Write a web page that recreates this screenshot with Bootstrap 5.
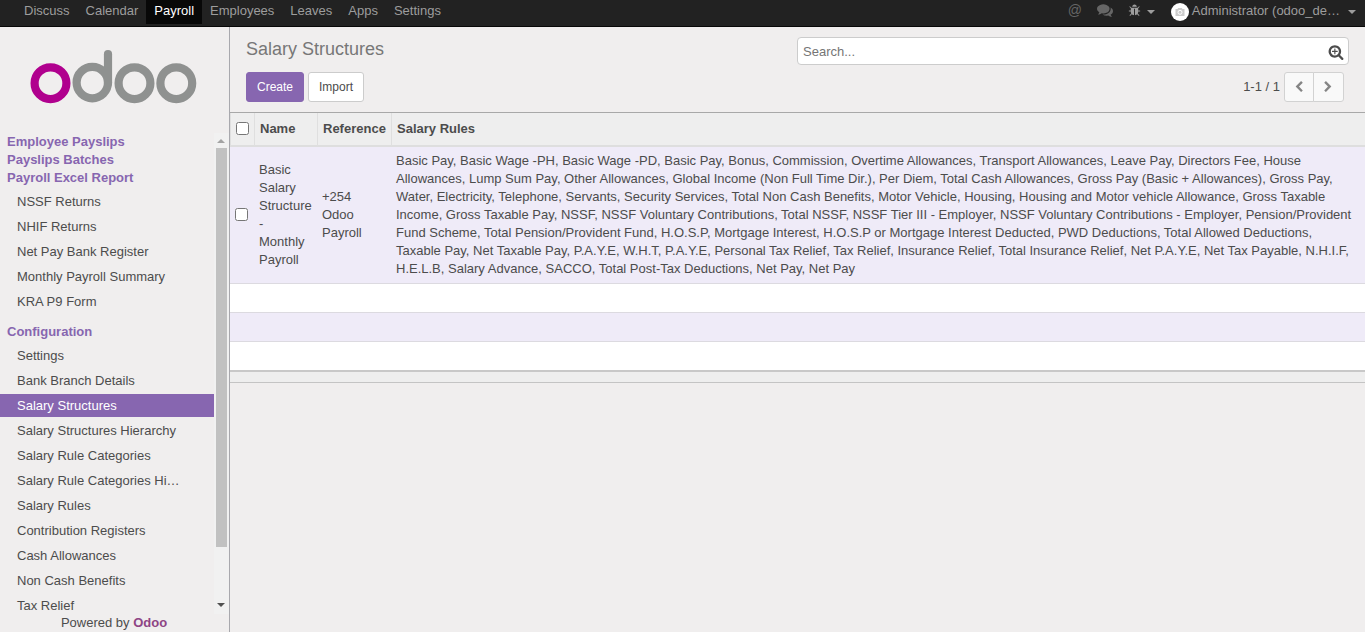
<!DOCTYPE html>
<html lang="en">
<head>
<meta charset="utf-8">
<title>Salary Structures - Odoo</title>
<meta name="viewport" content="width=device-width, initial-scale=1">
<link rel="stylesheet" href="https://cdn.jsdelivr.net/npm/bootstrap@5.3.0/dist/css/bootstrap.min.css">
<style>
:root { --brand: #8766b0; --ink: #4c4c4c; }
body { font: 13px/18px "Liberation Sans", Arial, sans-serif; color: var(--ink); background: #f0eeee; }
a { text-decoration: none; color: inherit; }
.topbar { height: 27px; background: #222; border-bottom: 1px solid #080808; color: #9d9d9d; padding: 0 0 0 16px; }
.topbar .nav-link { color: #9d9d9d; padding: 2px 8px 4px; height: 24px; line-height: 18px; }
.topbar .nav-link.active { color: #fff; background: #080808; }
.systray { height: 24px; color: #9d9d9d; }
.at-sign { color: #666; font-size: 14px; padding-top: 1px; margin-right: 15px; }
.caret { border: 4px solid transparent; border-top-color: currentColor; border-bottom: 0; }
.avatar { width: 18px; height: 18px; background: #fff; }
.side { width: 230px; border-right: 1px solid #a8a8ad; }
.logo-box { height: 106px; }
.menu-scroll { height: 481px; }
.menu-list { width: 214px; }
.section-title { color: var(--brand); font-weight: bold; padding-left: 7px; }
.menu-list .nav-link { color: var(--ink); height: 23px; padding: 3px 34px 2px 17px; margin-bottom: 2px; line-height: 18px; }
.menu-list .nav-link.active { background: var(--brand); color: #fff; }
.track { width: 15px; background: #f1f1f1; }
.thumb { width: 11px; height: 399px; background: #c1c1c1; }
.arrow-box { height: 15px; padding-right: 1px; }
.control { height: 86px; border-bottom: 1px solid #a8a8a8; padding: 10px 16px 0; }
.page-title { font-size: 18px; line-height: 22px; color: #777; padding-top: 1px; }
.control .btn { font-size: 12px; line-height: 18px; height: 30px; padding: 5px 10px; border-radius: 3px; }
.btn-brand { --bs-btn-color: #fff; --bs-btn-bg: #8766b0; --bs-btn-border-color: #8766b0; }
.btn-plain { --bs-btn-color: #4c4c4c; --bs-btn-bg: #fff; --bs-btn-border-color: #ccc; }
.btn-pager { --bs-btn-color: #858585; --bs-btn-bg: #f9f9f9; --bs-btn-border-color: #d2d2d2; width: 30px; }
.control .btn-pager { padding: 0 1px 1px 0; }
.control .btn-group .btn:first-child { border-top-right-radius: 0; border-bottom-right-radius: 0; }
.control .btn-group .btn:last-child { border-top-left-radius: 0; border-bottom-left-radius: 0; }
.searchbox { width: 552px; height: 28px; background: #fff; border: 1px solid #ccc; border-radius: 4px; padding: 2px 4px 0 5px; color: #757575; }
.listing { table-layout: fixed; width: 100%; border-collapse: separate; border-spacing: 0; }
.listing th { height: 34px; padding: 0 5px; background: #eee; border-left: 1px solid #dfdfdf; border-bottom: 2px solid #dedede; font-weight: bold; white-space: nowrap; }
.listing td { padding: 5px; vertical-align: middle; border-bottom: 1px solid #dcdae0; height: 29px; background: #fff; }
.listing tr:nth-child(odd) td { background: #efebf8; }
.listing tbody tr:last-child td { border-bottom: 0; height: 28px; }
.listing tfoot td, .listing tfoot tr:nth-child(odd) td { background: #eee; height: 13px; padding: 0; border-top: 2px solid #c8c8c8; border-bottom: 1px solid #c4c4c4; }
.listing input { width: 13px; height: 13px; margin: 0 0 2px; display: block; }
</style>
</head>
<body class="vh-100 overflow-hidden d-flex flex-column">
<nav class="topbar d-flex justify-content-between flex-shrink-0">
  <div class="nav flex-nowrap">
    <a class="nav-link" href="#">Discuss</a>
    <a class="nav-link" href="#">Calendar</a>
    <a class="nav-link active" href="#">Payroll</a>
    <a class="nav-link" href="#">Employees</a>
    <a class="nav-link" href="#">Leaves</a>
    <a class="nav-link" href="#">Apps</a>
    <a class="nav-link" href="#">Settings</a>
  </div>
  <div class="systray d-flex">
    <span class="at-sign">@</span>
    <svg style="margin:2px 15px 0 0" width="16" height="16" viewBox="0 0 1792 1792" fill="#666"><path d="M1408 768q0 139-94 257t-256.500 186.500-353.500 68.500q-86 0-176-16-124 88-278 128-36 9-86 16h-3q-11 0-20.500-8t-11.500-21q-1-3-1-6.500t.5-6.500 2-6l2.500-5 3.500-5.500 4-5 4.500-5 4-4.500q5-6 23-25t26-29.500 22.500-29 25-38.500 20.500-44q-124-72-195-177t-71-224q0-139 94-257t256.500-186.500 353.500-68.500 353.500 68.500 256.500 186.500 94 257zm384 256q0 120-71 224.500t-195 176.500q10 24 20.500 44t25 38.500 22.500 29 26 29.500 23 25q1 1 4 4.500t4.500 5 4 5 3.500 5.500l2.500 5 2 6 .5 6.500-1 6.500q-3 14-13 22t-22 7q-50-7-86-16-154-40-278-128-90 16-176 16-271 0-472-132 58 4 88 4 161 0 309-45t264-129q125-92 192-212t67-254q0-77-23-152 129 71 204 178t75 230z"/></svg>
    <svg style="margin:4px 6px 0 0" width="13" height="13" viewBox="0 0 1792 1792" fill="currentColor"><path d="M1696 960q0 26-19 45t-45 19h-224q0 171-67 290l208 209q19 19 19 45t-19 45q-18 19-45 19t-45-19l-198-197q-5 5-15 13t-42 28.500-65 36.500-82 29-97 13v-896h-128v896q-51 0-101.500-13.500t-87-33-66-39-43.500-32.500l-15-14-183 207q-20 21-48 21-24 0-43-16-19-18-20.500-44.500t15.500-46.500l202-227q-58-114-58-274h-224q-26 0-45-19t-19-45 19-45 45-19h224v-294l-173-173q-19-19-19-45t19-45 45-19 45 19l173 173h844l173-173q19-19 45-19t45 19 19 45-19 45l-173 173v294h224q26 0 45 19t19 45zm-480-576h-640q0-133 93.500-226.500t226.500-93.500 226.500 93.500 93.500 226.500z"/></svg>
    <span class="caret" style="margin:10px 16px 0 0"></span>
    <span class="avatar rounded-circle d-flex align-items-center justify-content-center" style="margin:3px 3px 0 0"><svg width="10" height="8" viewBox="0 0 10 8"><path d="M.5 1h2l.7-1h3.600l.7 1h2v7h-9z" fill="#ccc"/><circle cx="5" cy="4.300" r="2" fill="none" stroke="#fff"/></svg></span>
    <span style="padding-top:2px">Administrator (odoo_de…</span>
    <span class="caret" style="margin:10px 9px 0 8px"></span>
  </div>
</nav>
<div class="d-flex flex-grow-1">
  <aside class="side flex-shrink-0 d-flex flex-column">
    <div class="logo-box">
      <svg width="229" height="106" viewBox="0 27 229 106" fill="none" stroke="#8f9190" stroke-width="8.200">
        <circle cx="50.500" cy="83.200" r="15.900" stroke="#b0008e"/>
        <circle cx="92.300" cy="82.600" r="15.700"/><path d="M108 83V54.200" stroke-linecap="round"/>
        <circle cx="134.500" cy="83.200" r="15.900"/><circle cx="176.300" cy="83.200" r="15.900"/>
      </svg>
    </div>
    <div class="menu-scroll d-flex overflow-hidden">
      <div class="menu-list flex-shrink-0">
        <div class="section-title">Employee Payslips</div>
        <div class="section-title">Payslips Batches</div>
        <div class="section-title">Payroll Excel Report</div>
        <div class="nav flex-column flex-nowrap" style="padding-top:3px">
          <a class="nav-link" href="#">NSSF Returns</a>
          <a class="nav-link" href="#">NHIF Returns</a>
          <a class="nav-link" href="#">Net Pay Bank Register</a>
          <a class="nav-link" href="#">Monthly Payroll Summary</a>
          <a class="nav-link" href="#">KRA P9 Form</a>
        </div>
        <div class="section-title" style="padding-top:8px">Configuration</div>
        <div class="nav flex-column flex-nowrap" style="padding-top:3px">
          <a class="nav-link" href="#">Settings</a>
          <a class="nav-link" href="#">Bank Branch Details</a>
          <a class="nav-link active" href="#">Salary Structures</a>
          <a class="nav-link" href="#">Salary Structures Hierarchy</a>
          <a class="nav-link" href="#">Salary Rule Categories</a>
          <a class="nav-link text-truncate" href="#">Salary Rule Categories Hierarchy</a>
          <a class="nav-link" href="#">Salary Rules</a>
          <a class="nav-link" href="#">Contribution Registers</a>
          <a class="nav-link" href="#">Cash Allowances</a>
          <a class="nav-link" href="#">Non Cash Benefits</a>
          <a class="nav-link" href="#">Tax Relief</a>
        </div>
      </div>
      <div class="track d-flex flex-column align-items-center">
        <div class="arrow-box d-flex align-items-center"><svg width="8" height="4"><path d="M0 4L4 0l4 4z" fill="#a3a3a3"/></svg></div>
        <div class="thumb"></div>
        <div class="arrow-box mt-auto d-flex align-items-center pb-1"><svg width="8" height="4"><path d="M0 0h8L4 4z" fill="#505050"/></svg></div>
      </div>
    </div>
    <div class="text-center pe-1" style="margin-left:3px">Powered by <b style="color:#8e4585">Odoo</b></div>
  </aside>
  <main class="flex-grow-1">
    <div class="control">
      <div class="d-flex justify-content-between">
        <div class="page-title">Salary Structures</div>
        <div class="searchbox d-flex align-items-center justify-content-between">
          <span>Search...</span>
          <svg width="16" height="16" viewBox="0 0 1792 1792" fill="#4c4c4c"><path d="M1088 800v64q0 13-9.500 22.500t-22.500 9.500h-224v224q0 13-9.500 22.500t-22.500 9.500h-64q-13 0-22.500-9.500t-9.500-22.500v-224h-224q-13 0-22.500-9.500t-9.500-22.500v-64q0-13 9.500-22.500t22.500-9.500h224v-224q0-13 9.500-22.500t22.500-9.500h64q13 0 22.500 9.500t9.500 22.500v224h224q13 0 22.500 9.500t9.500 22.500zm128 32q0-185-131.500-316.500t-316.500-131.500-316.500 131.500-131.500 316.500 131.500 316.500 316.500 131.500 316.500-131.500 131.500-316.500zm512 832q0 53-37.500 90.500t-90.500 37.500q-54 0-90-38l-343-342q-179 124-399 124-143 0-273.500-55.500t-225-150-150-225-55.500-273.500 55.500-273.500 150-225 225-150 273.500-55.500 273.500 55.500 225 150 150 225 55.500 273.500q0 220-124 399l343 343q37 37 37 90z"/></svg>
        </div>
      </div>
      <div class="d-flex align-items-center" style="padding-top:7px">
        <button class="btn btn-brand" style="width:58px">Create</button>
        <button class="btn btn-plain ms-1" style="width:56px">Import</button>
        <span class="ms-auto me-1">1-1 / 1</span>
        <div class="btn-group" style="margin-right:5px">
          <button class="btn btn-pager d-flex align-items-center justify-content-center" aria-label="Previous"><svg width="12" height="12" viewBox="0 0 1792 1792" fill="currentColor"><path d="M1427 301l-531 531 531 531q19 19 19 45t-19 45l-166 166q-19 19-45 19t-45-19l-742-742q-19-19-19-45t19-45l742-742q19-19 45-19t45 19l166 166q19 19 19 45t-19 45z"/></svg></button>
          <button class="btn btn-pager d-flex align-items-center justify-content-center" style="width:31px" aria-label="Next"><svg width="12" height="12" viewBox="0 0 1792 1792" fill="currentColor"><path d="M1363 877l-742 742q-19 19-45 19t-45-19l-166-166q-19-19-19-45t19-45l531-531-531-531q-19-19-19-45t19-45l166-166q19-19 45-19t45 19l742 742q19 19 19 45t-19 45z"/></svg></button>
        </div>
      </div>
    </div>
    <table class="listing">
      <colgroup><col style="width:24px"><col style="width:63px"><col style="width:74px"><col></colgroup>
      <thead><tr><th><input type="checkbox" aria-label="Select all"></th><th>Name</th><th>Reference</th><th>Salary Rules</th></tr></thead>
      <tbody>
        <tr>
          <td><input type="checkbox" aria-label="Select row"></td>
          <td>Basic Salary Structure - Monthly Payroll</td>
          <td>+254 Odoo Payroll</td>
          <td>Basic Pay, Basic Wage -PH, Basic Wage -PD, Basic Pay, Bonus, Commission, Overtime Allowances, Transport Allowances, Leave Pay, Directors Fee, House Allowances, Lump Sum Pay, Other Allowances, Global Income (Non Full Time Dir.), Per Diem, Total Cash Allowances, Gross Pay (Basic + Allowances), Gross Pay, Water, Electricity, Telephone, Servants, Security Services, Total Non Cash Benefits, Motor Vehicle, Housing, Housing and Motor vehicle Allowance, Gross Taxable Income, Gross Taxable Pay, NSSF, NSSF Voluntary Contributions, Total NSSF, NSSF Tier III - Employer, NSSF Voluntary Contributions - Employer, Pension/Provident Fund Scheme, Total Pension/Provident Fund, H.O.S.P, Mortgage Interest, H.O.S.P or Mortgage Interest Deducted, PWD Deductions, Total Allowed Deductions, Taxable Pay, Net Taxable Pay, P.A.Y.E, W.H.T, P.A.Y.E, Personal Tax Relief, Tax Relief, Insurance Relief, Total Insurance Relief, Net P.A.Y.E, Net Tax Payable, N.H.I.F, H.E.L.B, Salary Advance, SACCO, Total Post-Tax Deductions, Net Pay, Net Pay</td>
        </tr>
        <tr><td colspan="4"></td></tr>
        <tr><td colspan="4"></td></tr>
        <tr><td colspan="4"></td></tr>
      </tbody>
      <tfoot><tr><td colspan="4"></td></tr></tfoot>
    </table>
  </main>
</div>
<script src="https://cdn.jsdelivr.net/npm/bootstrap@5.3.0/dist/js/bootstrap.bundle.min.js"></script>
</body>
</html>
